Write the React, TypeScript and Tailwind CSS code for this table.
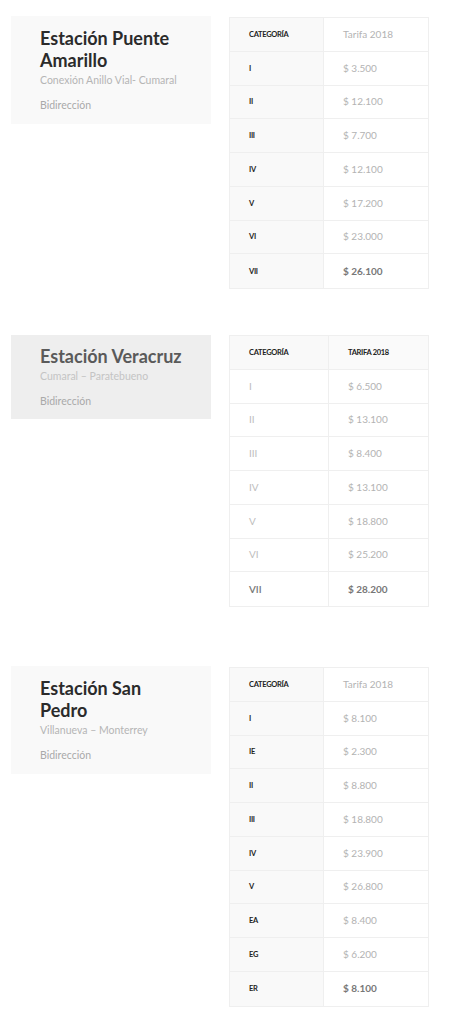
type Row = { cat: string; price: string }

type Station = {
  name: string
  route: string
  rows: Row[]
  alt?: boolean
}

const stations: Station[] = [
  {
    name: 'Estación Puente Amarillo',
    route: 'Conexión Anillo Vial- Cumaral',
    rows: [
      { cat: 'I', price: '$ 3.500' },
      { cat: 'II', price: '$ 12.100' },
      { cat: 'III', price: '$ 7.700' },
      { cat: 'IV', price: '$ 12.100' },
      { cat: 'V', price: '$ 17.200' },
      { cat: 'VI', price: '$ 23.000' },
      { cat: 'VII', price: '$ 26.100' },
    ],
  },
  {
    name: 'Estación Veracruz',
    route: 'Cumaral – Paratebueno',
    alt: true,
    rows: [
      { cat: 'I', price: '$ 6.500' },
      { cat: 'II', price: '$ 13.100' },
      { cat: 'III', price: '$ 8.400' },
      { cat: 'IV', price: '$ 13.100' },
      { cat: 'V', price: '$ 18.800' },
      { cat: 'VI', price: '$ 25.200' },
      { cat: 'VII', price: '$ 28.200' },
    ],
  },
  {
    name: 'Estación San Pedro',
    route: 'Villanueva – Monterrey',
    rows: [
      { cat: 'I', price: '$ 8.100' },
      { cat: 'IE', price: '$ 2.300' },
      { cat: 'II', price: '$ 8.800' },
      { cat: 'III', price: '$ 18.800' },
      { cat: 'IV', price: '$ 23.900' },
      { cat: 'V', price: '$ 26.800' },
      { cat: 'EA', price: '$ 8.400' },
      { cat: 'EG', price: '$ 6.200' },
      { cat: 'ER', price: '$ 8.100' },
    ],
  },
]

function StationCard({ s }: { s: Station }) {
  return (
    <div
      className={
        'w-[200px] pl-[29px] pr-3 ' +
        (s.alt ? 'bg-[#eeeeee] pt-[10px] pb-[10px]' : 'bg-[#f9f9f9] pt-[11px] pb-[11px]')
      }
    >
      <h3
        className={
          'max-w-[148px] text-[18px] leading-[22px] font-bold ' +
          (s.alt ? 'text-[#5a5a5a]' : 'text-[#2b2b2b]')
        }
      >
        {s.name}
      </h3>
      <p
        className={
          'text-[10.5px] leading-[15px] mt-[2px] ' + (s.alt ? 'text-[#c4c4c4]' : 'text-[#b5b5b5]')
        }
      >
        {s.route}
      </p>
      <p className="text-[10.5px] leading-[15px] mt-[10px] text-[#a9a9a9]">Bidirección</p>
    </div>
  )
}

function FareTable({ s }: { s: Station }) {
  const firstCol = s.alt ? 'w-[99px]' : 'w-[94px]'
  const last = s.rows.length - 1
  return (
    <div className="w-[200px] border border-[#efefef] bg-white">
      <div className={'flex h-[33.75px] border-b border-[#efefef] ' + (s.alt ? 'bg-[#fafafa]' : '')}>
        <div className={firstCol + ' flex items-center pl-[19px] border-r border-[#efefef] bg-[#f9f9f9]'}>
          <span className="text-[7.5px] font-bold tracking-[-0.3px] text-[#222]">CATEGORÍA</span>
        </div>
        <div className="flex-1 flex items-center pl-[19px]">
          {s.alt ? (
            <span className="text-[7.5px] font-bold tracking-[-0.3px] text-[#222]">TARIFA 2018</span>
          ) : (
            <span className="text-[10px] text-[#b3b3b3]">Tarifa 2018</span>
          )}
        </div>
      </div>
      {s.rows.map((r, i) => (
        <div
          key={r.cat + i}
          className={'flex h-[33.75px] ' + (i < last ? 'border-b border-[#efefef]' : '')}
        >
          <div
            className={
              firstCol +
              ' flex items-center pl-[19px] border-r border-[#efefef] ' +
              (s.alt ? 'bg-white' : 'bg-[#f9f9f9]')
            }
          >
            {s.alt ? (
              <span
                className={
                  'text-[10px] ' + (i === last ? 'font-semibold text-[#777]' : 'text-[#bdbdbd]')
                }
              >
                {r.cat}
              </span>
            ) : (
              <span className="text-[7.5px] font-bold tracking-[-0.3px] text-[#222]">{r.cat}</span>
            )}
          </div>
          <div className="flex-1 flex items-center pl-[19px]">
            <span
              className={
                'text-[10px] ' + (i === last ? 'font-bold text-[#777]' : 'text-[#b3b3b3]')
              }
            >
              {r.price}
            </span>
          </div>
        </div>
      ))}
    </div>
  )
}

export default function App() {
  return (
    <div className="w-[451px] min-h-[1024px] bg-white font-['Lato','Open_Sans',sans-serif]">
      <section className="flex gap-[18px] pl-[11px] pt-[16px]">
        <div>
          <StationCard s={stations[0]} />
        </div>
        <div className="pt-[1px]">
          <FareTable s={stations[0]} />
        </div>
      </section>
      <section className="flex gap-[18px] pl-[11px] mt-[46px]">
        <div>
          <StationCard s={stations[1]} />
        </div>
        <FareTable s={stations[1]} />
      </section>
      <section className="flex gap-[18px] pl-[11px] mt-[59px]">
        <div>
          <StationCard s={stations[2]} />
        </div>
        <div className="pt-[1px]">
          <FareTable s={stations[2]} />
        </div>
      </section>
    </div>
  )
}
